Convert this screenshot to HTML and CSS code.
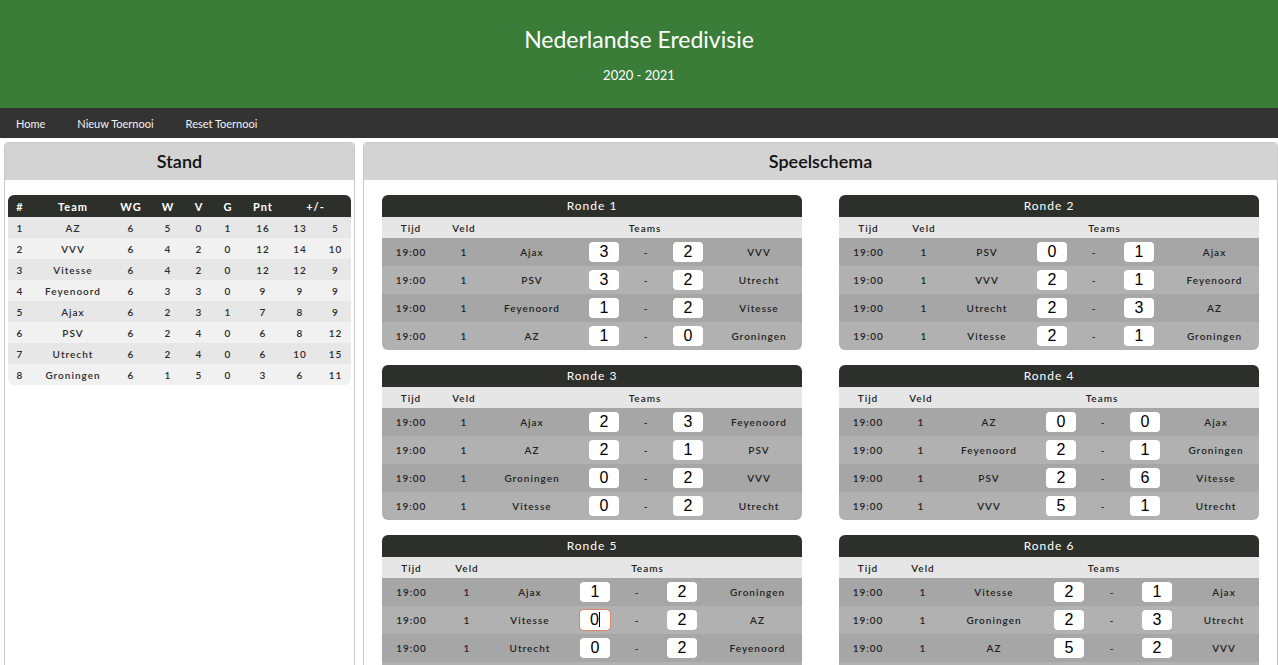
FILE: index.html
```html
<!DOCTYPE html>
<html lang="nl">
<head>
<meta charset="utf-8">
<title>Nederlandse Eredivisie</title>
<link rel="stylesheet" href="styles.css">
</head>
<body>
<header class="site-header">
  <h1 class="site-title">Nederlandse Eredivisie</h1>
  <p class="site-sub">2020 - 2021</p>
</header>
<nav class="nav">
  <a class="nav-link" href="#">Home</a>
  <a class="nav-link" href="#">Nieuw Toernooi</a>
  <a class="nav-link" href="#">Reset Toernooi</a>
</nav>
<main class="main">
  <section class="panel panel-left">
    <h2 class="panel-head">Stand</h2>
    <div class="panel-body-left">
      <table class="stand">
        <colgroup>
          <col class="s-pos"><col class="s-team"><col class="s-wg"><col class="s-w"><col class="s-v"><col class="s-g"><col class="s-pnt"><col class="s-for"><col class="s-against">
        </colgroup>
        <thead>
          <tr><th>#</th><th>Team</th><th>WG</th><th>W</th><th>V</th><th>G</th><th>Pnt</th><th colspan="2">+/-</th></tr>
        </thead>
        <tbody>
          <tr><td>1</td><td>AZ</td><td>6</td><td>5</td><td>0</td><td>1</td><td>16</td><td>13</td><td>5</td></tr>
          <tr><td>2</td><td>VVV</td><td>6</td><td>4</td><td>2</td><td>0</td><td>12</td><td>14</td><td>10</td></tr>
          <tr><td>3</td><td>Vitesse</td><td>6</td><td>4</td><td>2</td><td>0</td><td>12</td><td>12</td><td>9</td></tr>
          <tr><td>4</td><td>Feyenoord</td><td>6</td><td>3</td><td>3</td><td>0</td><td>9</td><td>9</td><td>9</td></tr>
          <tr><td>5</td><td>Ajax</td><td>6</td><td>2</td><td>3</td><td>1</td><td>7</td><td>8</td><td>9</td></tr>
          <tr><td>6</td><td>PSV</td><td>6</td><td>2</td><td>4</td><td>0</td><td>6</td><td>8</td><td>12</td></tr>
          <tr><td>7</td><td>Utrecht</td><td>6</td><td>2</td><td>4</td><td>0</td><td>6</td><td>10</td><td>15</td></tr>
          <tr><td>8</td><td>Groningen</td><td>6</td><td>1</td><td>5</td><td>0</td><td>3</td><td>6</td><td>11</td></tr>
        </tbody>
      </table>
    </div>
  </section>
  <section class="panel panel-right">
    <h2 class="panel-head">Speelschema</h2>
    <div class="rounds">

      <div class="card">
        <div class="card-title">Ronde 1</div>
        <table class="round">
          <colgroup><col class="r-tijd"><col class="r-veld"><col class="r-home"><col class="r-s1"><col class="r-dash"><col class="r-s2"><col class="r-away"></colgroup>
          <thead><tr><th>Tijd</th><th>Veld</th><th colspan="5">Teams</th></tr></thead>
          <tbody>
            <tr><td>19:00</td><td>1</td><td>Ajax</td><td><span class="score">3</span></td><td>-</td><td><span class="score">2</span></td><td>VVV</td></tr>
            <tr><td>19:00</td><td>1</td><td>PSV</td><td><span class="score">3</span></td><td>-</td><td><span class="score">2</span></td><td>Utrecht</td></tr>
            <tr><td>19:00</td><td>1</td><td>Feyenoord</td><td><span class="score">1</span></td><td>-</td><td><span class="score">2</span></td><td>Vitesse</td></tr>
            <tr><td>19:00</td><td>1</td><td>AZ</td><td><span class="score">1</span></td><td>-</td><td><span class="score">0</span></td><td>Groningen</td></tr>
          </tbody>
        </table>
      </div>

      <div class="card">
        <div class="card-title">Ronde 2</div>
        <table class="round round-b">
          <colgroup><col class="r-tijd"><col class="r-veld"><col class="r-home"><col class="r-s1"><col class="r-dash"><col class="r-s2"><col class="r-away"></colgroup>
          <thead><tr><th>Tijd</th><th>Veld</th><th colspan="5">Teams</th></tr></thead>
          <tbody>
            <tr><td>19:00</td><td>1</td><td>PSV</td><td><span class="score">0</span></td><td>-</td><td><span class="score">1</span></td><td>Ajax</td></tr>
            <tr><td>19:00</td><td>1</td><td>VVV</td><td><span class="score">2</span></td><td>-</td><td><span class="score">1</span></td><td>Feyenoord</td></tr>
            <tr><td>19:00</td><td>1</td><td>Utrecht</td><td><span class="score">2</span></td><td>-</td><td><span class="score">3</span></td><td>AZ</td></tr>
            <tr><td>19:00</td><td>1</td><td>Vitesse</td><td><span class="score">2</span></td><td>-</td><td><span class="score">1</span></td><td>Groningen</td></tr>
          </tbody>
        </table>
      </div>

      <div class="card">
        <div class="card-title">Ronde 3</div>
        <table class="round">
          <colgroup><col class="r-tijd"><col class="r-veld"><col class="r-home"><col class="r-s1"><col class="r-dash"><col class="r-s2"><col class="r-away"></colgroup>
          <thead><tr><th>Tijd</th><th>Veld</th><th colspan="5">Teams</th></tr></thead>
          <tbody>
            <tr><td>19:00</td><td>1</td><td>Ajax</td><td><span class="score">2</span></td><td>-</td><td><span class="score">3</span></td><td>Feyenoord</td></tr>
            <tr><td>19:00</td><td>1</td><td>AZ</td><td><span class="score">2</span></td><td>-</td><td><span class="score">1</span></td><td>PSV</td></tr>
            <tr><td>19:00</td><td>1</td><td>Groningen</td><td><span class="score">0</span></td><td>-</td><td><span class="score">2</span></td><td>VVV</td></tr>
            <tr><td>19:00</td><td>1</td><td>Vitesse</td><td><span class="score">0</span></td><td>-</td><td><span class="score">2</span></td><td>Utrecht</td></tr>
          </tbody>
        </table>
      </div>

      <div class="card">
        <div class="card-title">Ronde 4</div>
        <table class="round">
          <colgroup><col class="r-tijd"><col class="r-veld"><col class="r-home"><col class="r-s1"><col class="r-dash"><col class="r-s2"><col class="r-away"></colgroup>
          <thead><tr><th>Tijd</th><th>Veld</th><th colspan="5">Teams</th></tr></thead>
          <tbody>
            <tr><td>19:00</td><td>1</td><td>AZ</td><td><span class="score">0</span></td><td>-</td><td><span class="score">0</span></td><td>Ajax</td></tr>
            <tr><td>19:00</td><td>1</td><td>Feyenoord</td><td><span class="score">2</span></td><td>-</td><td><span class="score">1</span></td><td>Groningen</td></tr>
            <tr><td>19:00</td><td>1</td><td>PSV</td><td><span class="score">2</span></td><td>-</td><td><span class="score">6</span></td><td>Vitesse</td></tr>
            <tr><td>19:00</td><td>1</td><td>VVV</td><td><span class="score">5</span></td><td>-</td><td><span class="score">1</span></td><td>Utrecht</td></tr>
          </tbody>
        </table>
      </div>

      <div class="card">
        <div class="card-title">Ronde 5</div>
        <table class="round round-b">
          <colgroup><col class="r-tijd"><col class="r-veld"><col class="r-home"><col class="r-s1"><col class="r-dash"><col class="r-s2"><col class="r-away"></colgroup>
          <thead><tr><th>Tijd</th><th>Veld</th><th colspan="5">Teams</th></tr></thead>
          <tbody>
            <tr><td>19:00</td><td>1</td><td>Ajax</td><td><span class="score">1</span></td><td>-</td><td><span class="score">2</span></td><td>Groningen</td></tr>
            <tr><td>19:00</td><td>1</td><td>Vitesse</td><td><span class="score score-focus">0<span class="caret"></span></span></td><td>-</td><td><span class="score">2</span></td><td>AZ</td></tr>
            <tr><td>19:00</td><td>1</td><td>Utrecht</td><td><span class="score">0</span></td><td>-</td><td><span class="score">2</span></td><td>Feyenoord</td></tr>
            <tr><td>19:00</td><td>1</td><td>PSV</td><td><span class="score">1</span></td><td>-</td><td><span class="score">1</span></td><td>VVV</td></tr>
          </tbody>
        </table>
      </div>

      <div class="card">
        <div class="card-title">Ronde 6</div>
        <table class="round round-c">
          <colgroup><col class="r-tijd"><col class="r-veld"><col class="r-home"><col class="r-s1"><col class="r-dash"><col class="r-s2"><col class="r-away"></colgroup>
          <thead><tr><th>Tijd</th><th>Veld</th><th colspan="5">Teams</th></tr></thead>
          <tbody>
            <tr><td>19:00</td><td>1</td><td>Vitesse</td><td><span class="score">2</span></td><td>-</td><td><span class="score">1</span></td><td>Ajax</td></tr>
            <tr><td>19:00</td><td>1</td><td>Groningen</td><td><span class="score">2</span></td><td>-</td><td><span class="score">3</span></td><td>Utrecht</td></tr>
            <tr><td>19:00</td><td>1</td><td>AZ</td><td><span class="score">5</span></td><td>-</td><td><span class="score">2</span></td><td>VVV</td></tr>
            <tr><td>19:00</td><td>1</td><td>Feyenoord</td><td><span class="score">1</span></td><td>-</td><td><span class="score">1</span></td><td>PSV</td></tr>
          </tbody>
        </table>
      </div>

    </div>
  </section>
</main>
</body>
</html>
```

FILE: styles.css
```css
* { box-sizing: border-box; }

body {
  margin: 0;
  font-family: Lato, "Open Sans", sans-serif;
  background: #ffffff;
  color: #222;
}

.site-header {
  background: #3a7d38;
  height: 108px;
  color: #ffffff;
  text-align: center;
  padding-top: 26px;
}

.site-title {
  margin: 0;
  font-size: 23px;
  line-height: 26px;
  font-weight: 400;
}

.site-sub {
  margin: 14px 0 0;
  font-size: 13px;
  line-height: 18px;
}

.nav {
  background: #333333;
  height: 30px;
  display: flex;
  align-items: center;
}

.nav-link {
  color: #f2f2f2;
  text-decoration: none;
  font-size: 11px;
  padding: 0 16px;
}

.main {
  display: flex;
  gap: 8px;
  padding: 4px 0 0 4px;
}

.panel {
  border: 1px solid #c9c9c9;
  border-radius: 4px 4px 0 0;
  background: #ffffff;
  min-height: 600px;
}

.panel-left { width: 351px; flex: none; }
.panel-right { flex: 1; }

.panel-head {
  margin: 0;
  background: #d3d3d3;
  height: 37px;
  line-height: 37px;
  text-align: center;
  font-size: 18px;
  font-weight: 600;
  color: #111;
  border-radius: 3px 3px 0 0;
}

.panel-body-left {
  padding: 15px 3px;
}

.stand {
  width: 343px;
  table-layout: fixed;
  border-collapse: collapse;
  font-size: 10px;
  letter-spacing: 1px;
  border-radius: 6px;
  overflow: hidden;
}

.s-pos { width: 24px; }
.s-team { width: 82px; }
.s-wg { width: 34px; }
.s-w { width: 40px; }
.s-v { width: 22px; }
.s-g { width: 36px; }
.s-pnt { width: 34px; }
.s-for { width: 40px; }
.s-against { width: 31px; }

.stand th {
  background: #2c2f2a;
  color: #ffffff;
  font-weight: 700;
  font-size: 11px;
  height: 22px;
  padding: 0;
  text-align: center;
}

.stand td {
  height: 21px;
  padding: 0;
  text-align: center;
  color: #2a2a2a;
  font-weight: 600;
}

.stand tbody tr:nth-child(odd) { background: #e7e7e7; }
.stand tbody tr:nth-child(even) { background: #f1f1f1; }

.rounds {
  display: grid;
  grid-template-columns: 420px 420px;
  column-gap: 37px;
  row-gap: 15px;
  padding: 15px 18px;
}

.card {
  border-radius: 6px;
  overflow: hidden;
}

.card-title {
  background: #2c2f2a;
  color: #ffffff;
  text-align: center;
  height: 22px;
  line-height: 22px;
  font-size: 12px;
  letter-spacing: 1px;
}

.round {
  width: 420px;
  table-layout: fixed;
  border-collapse: collapse;
  font-size: 10px;
  letter-spacing: 1px;
}

.r-tijd { width: 58px; }
.r-veld { width: 48px; }
.r-home { width: 88px; }
.r-s1 { width: 56px; }
.r-dash { width: 28px; }
.r-s2 { width: 56px; }
.r-away { width: 86px; }

.round-b .r-tijd { width: 59px; }
.round-b .r-veld { width: 52px; }
.round-b .r-home { width: 74px; }
.round-b .r-s1 { width: 56px; }
.round-b .r-dash { width: 28px; }
.round-b .r-s2 { width: 62px; }
.round-b .r-away { width: 89px; }

.round-c .r-tijd { width: 58px; }
.round-c .r-veld { width: 52px; }
.round-c .r-home { width: 90px; }
.round-c .r-s1 { width: 60px; }
.round-c .r-dash { width: 26px; }
.round-c .r-s2 { width: 64px; }
.round-c .r-away { width: 70px; }

.round th {
  background: #e6e6e6;
  height: 21px;
  padding: 0;
  font-weight: 600;
  color: #222;
}

.round td {
  height: 28px;
  padding: 0;
  text-align: center;
  color: #222;
  font-weight: 600;
}

.round tbody tr:nth-child(odd) { background: #a6a6a6; }
.round tbody tr:nth-child(even) { background: #b1b1b1; }

.score {
  display: inline-block;
  width: 30px;
  height: 20px;
  line-height: 20px;
  background: #ffffff;
  border-radius: 4px;
  font-family: "Liberation Sans", Arial, sans-serif;
  font-size: 16px;
  font-weight: 400;
  letter-spacing: 0;
  color: #000;
  vertical-align: middle;
}

.score-focus {
  box-shadow: 0 0 0 1px #e0876a;
}

.caret {
  display: inline-block;
  width: 1px;
  height: 15px;
  background: #000;
  vertical-align: -2px;
}
```
